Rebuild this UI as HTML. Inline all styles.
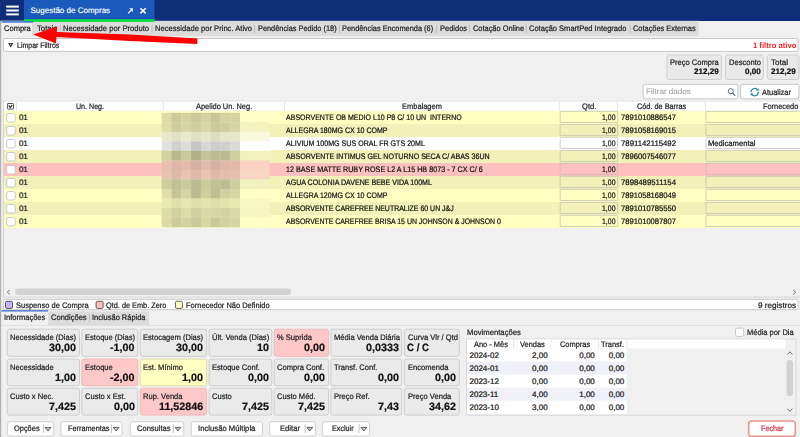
<!DOCTYPE html>
<html><head><meta charset="utf-8"><title>Sugestão de Compras</title>
<style>
*{box-sizing:border-box;margin:0;padding:0}
html,body{width:800px;height:437px;overflow:hidden;background:#f0f0f0}
body{font-family:"Liberation Sans",sans-serif;font-size:8px;color:#222;position:relative;line-height:1;text-rendering:geometricPrecision}
svg{position:absolute;left:0;top:0}
.t{position:absolute;white-space:nowrap;line-height:1;transform-origin:0 50%;-webkit-text-stroke:.22px currentColor}

</style></head>
<body>
<svg width="800" height="437" viewBox="0 0 800 437"><defs><filter id="bl" x="-5%" y="-5%" width="110%" height="110%"><feGaussianBlur stdDeviation="0.5"/></filter></defs>
<rect x="0.00" y="0.00" width="800.00" height="21.00" fill="#0f2e7a"/>
<rect x="24.00" y="0.00" width="130.40" height="21.00" fill="#1b5abc"/>
<rect x="24.00" y="18.20" width="130.40" height="1.10" fill="#1c4cc2"/>
<rect x="6.20" y="5.60" width="12.60" height="2.00" fill="#ffffff"/>
<rect x="6.20" y="9.50" width="12.60" height="2.00" fill="#ffffff"/>
<rect x="6.20" y="13.40" width="12.60" height="2.00" fill="#ffffff"/>
<path d="M128.1 13.4 L132 9.4" fill="none" stroke="#fff" stroke-width="1.35" />
<path d="M129.2 8.3 H132.9 V12 Z" fill="#fff" />
<path d="M140.4 8.2 L145.7 13.4 M145.7 8.2 L140.4 13.4" fill="none" stroke="#fff" stroke-width="1.5" />
<rect x="0.00" y="20.80" width="698.70" height="15.30" fill="#dcdcdc"/>
<rect x="1.20" y="20.80" width="30.80" height="15.30" fill="#f0f0f0"/>
<rect x="24.00" y="19.20" width="130.40" height="2.70" fill="#08e23c"/>
<rect x="1.20" y="21.15" width="31.80" height="1.55" fill="#3c78cc"/>
<rect x="60.10" y="24.80" width="0.80" height="8.20" fill="#b6b6b6"/>
<rect x="151.50" y="24.80" width="0.80" height="8.20" fill="#b6b6b6"/>
<rect x="254.20" y="24.80" width="0.80" height="8.20" fill="#b6b6b6"/>
<rect x="338.90" y="24.80" width="0.80" height="8.20" fill="#b6b6b6"/>
<rect x="435.90" y="24.80" width="0.80" height="8.20" fill="#b6b6b6"/>
<rect x="469.20" y="24.80" width="0.80" height="8.20" fill="#b6b6b6"/>
<rect x="525.90" y="24.80" width="0.80" height="8.20" fill="#b6b6b6"/>
<rect x="629.70" y="24.80" width="0.80" height="8.20" fill="#b6b6b6"/>
<rect x="3.40" y="38.50" width="794.70" height="12.90" rx="1.5" fill="#fff" stroke="#c6c6c6" stroke-width="1"/>
<path d="M8.1 43.1 H13.3 L10.7 47.4 Z" fill="#2a2a2a" />
<path d="M9.9 43.8 H11.5 L10.7 45.2Z" fill="#fff" />
<rect x="666.90" y="55.00" width="54.50" height="24.50" rx="2.3" fill="#e9e9e9" stroke="#d0d0d0" stroke-width="1"/>
<rect x="725.50" y="55.00" width="37.90" height="24.50" rx="2.3" fill="#e9e9e9" stroke="#d0d0d0" stroke-width="1"/>
<rect x="767.30" y="55.00" width="31.70" height="24.50" rx="2.3" fill="#e9e9e9" stroke="#d0d0d0" stroke-width="1"/>
<rect x="643.20" y="84.30" width="94.60" height="14.50" rx="1.8" fill="#fff" stroke="#c8c8c8" stroke-width="1"/>
<circle cx="730.8" cy="91.2" r="2.55" fill="none" stroke="#50607a" stroke-width="0.95"/>
<path d="M732.7 93.1 L735.2 95.6" fill="none" stroke="#50607a" stroke-width="1.2" />
<rect x="740.60" y="84.30" width="58.30" height="14.50" rx="1.8" fill="#fff" stroke="#c8c8c8" stroke-width="1"/>
<g transform="translate(749.8,87.3)"><g fill="none" stroke="#1f8596" stroke-width="1.2"><path d="M1.3 4.9 A3.6 3.6 0 0 1 7.6 2.4"/><path d="M8.5 4.7 A3.6 3.6 0 0 1 2.2 7.2"/></g><path d="M8.9 0.9 L8.8 3.7 L6.1 3.3Z" fill="#1f8596"/><path d="M0.9 8.7 L1 5.9 L3.7 6.3Z" fill="#1f8596"/></g>
<rect x="3.10" y="100.80" width="796.90" height="196.50" fill="none"/>
<rect x="3.10" y="100.80" width="796.90" height="0.70" fill="#d4d4d4"/>
<rect x="3.10" y="100.80" width="0.70" height="196.50" fill="#c2c2c2"/>
<rect x="3.10" y="296.70" width="796.90" height="0.70" fill="#d0d0d0"/>
<rect x="3.80" y="101.50" width="796.20" height="8.90" fill="#ffffff"/>
<rect x="16.00" y="101.50" width="0.80" height="8.90" fill="#dedede"/>
<rect x="162.80" y="101.50" width="0.80" height="8.90" fill="#dedede"/>
<rect x="284.00" y="101.50" width="0.80" height="8.90" fill="#dedede"/>
<rect x="559.30" y="101.50" width="0.80" height="8.90" fill="#dedede"/>
<rect x="617.20" y="101.50" width="0.80" height="8.90" fill="#dedede"/>
<rect x="705.20" y="101.50" width="0.80" height="8.90" fill="#dedede"/>
<rect x="7.40" y="103.50" width="6.10" height="5.60" rx="0.6" fill="#fff" stroke="#555" stroke-width="1"/>
<path d="M8.8 105.4 L10.3 107.5 L12.3 104.9" fill="none" stroke="#222" stroke-width="1.1" />
<rect x="3.80" y="111.00" width="796.20" height="13.30" fill="#ffffc2"/>
<rect x="3.80" y="124.00" width="796.20" height="13.30" fill="#f1f1b9"/>
<rect x="3.80" y="137.00" width="796.20" height="13.30" fill="#ffffff"/>
<rect x="3.80" y="150.00" width="796.20" height="13.30" fill="#f1f1b9"/>
<rect x="3.80" y="163.00" width="796.20" height="13.30" fill="#ffc0c0"/>
<rect x="3.80" y="176.00" width="796.20" height="13.30" fill="#f1f1b9"/>
<rect x="3.80" y="189.00" width="796.20" height="13.30" fill="#ffffc2"/>
<rect x="3.80" y="202.00" width="796.20" height="13.30" fill="#f1f1b9"/>
<rect x="3.80" y="215.00" width="796.20" height="13.00" fill="#ffffc2"/>
<rect x="6.70" y="113.50" width="8.50" height="8.50" rx="1.8" fill="#fff" stroke="#c6c6d0" stroke-width="1"/>
<rect x="560.15" y="111.35" width="57.50" height="11.10" rx="0.4" fill="#ffffc2" stroke="#bcbcb0" stroke-width="0.7"/>
<rect x="705.95" y="111.35" width="96.00" height="11.10" rx="0.4" fill="#ffffc2" stroke="#bcbcb0" stroke-width="0.7"/>
<rect x="6.70" y="126.50" width="8.50" height="8.50" rx="1.8" fill="#fff" stroke="#c6c6d0" stroke-width="1"/>
<rect x="560.15" y="124.35" width="57.50" height="11.10" rx="0.4" fill="#f1f1b9" stroke="#bcbcb0" stroke-width="0.7"/>
<rect x="705.95" y="124.35" width="96.00" height="11.10" rx="0.4" fill="#f1f1b9" stroke="#bcbcb0" stroke-width="0.7"/>
<rect x="6.70" y="139.50" width="8.50" height="8.50" rx="1.8" fill="#fff" stroke="#c6c6d0" stroke-width="1"/>
<rect x="560.15" y="137.35" width="57.50" height="11.10" rx="0.4" fill="#ffffff" stroke="#bcbcb0" stroke-width="0.7"/>
<rect x="705.95" y="137.35" width="96.00" height="11.10" rx="0.4" fill="#ffffff" stroke="#bcbcb0" stroke-width="0.7"/>
<rect x="6.70" y="152.50" width="8.50" height="8.50" rx="1.8" fill="#fff" stroke="#c6c6d0" stroke-width="1"/>
<rect x="560.15" y="150.35" width="57.50" height="11.10" rx="0.4" fill="#f1f1b9" stroke="#bcbcb0" stroke-width="0.7"/>
<rect x="705.95" y="150.35" width="96.00" height="11.10" rx="0.4" fill="#f1f1b9" stroke="#bcbcb0" stroke-width="0.7"/>
<rect x="6.70" y="165.50" width="8.50" height="8.50" rx="1.8" fill="#fff" stroke="#c6c6d0" stroke-width="1"/>
<rect x="560.15" y="163.35" width="57.50" height="11.10" rx="0.4" fill="#ffc0c0" stroke="#bcbcb0" stroke-width="0.7"/>
<rect x="705.95" y="163.35" width="96.00" height="11.10" rx="0.4" fill="#ffc0c0" stroke="#bcbcb0" stroke-width="0.7"/>
<rect x="6.70" y="178.50" width="8.50" height="8.50" rx="1.8" fill="#fff" stroke="#c6c6d0" stroke-width="1"/>
<rect x="560.15" y="176.35" width="57.50" height="11.10" rx="0.4" fill="#f1f1b9" stroke="#bcbcb0" stroke-width="0.7"/>
<rect x="705.95" y="176.35" width="96.00" height="11.10" rx="0.4" fill="#f1f1b9" stroke="#bcbcb0" stroke-width="0.7"/>
<rect x="6.70" y="191.50" width="8.50" height="8.50" rx="1.8" fill="#fff" stroke="#c6c6d0" stroke-width="1"/>
<rect x="560.15" y="189.35" width="57.50" height="11.10" rx="0.4" fill="#ffffc2" stroke="#bcbcb0" stroke-width="0.7"/>
<rect x="705.95" y="189.35" width="96.00" height="11.10" rx="0.4" fill="#ffffc2" stroke="#bcbcb0" stroke-width="0.7"/>
<rect x="6.70" y="204.50" width="8.50" height="8.50" rx="1.8" fill="#fff" stroke="#c6c6d0" stroke-width="1"/>
<rect x="560.15" y="202.35" width="57.50" height="11.10" rx="0.4" fill="#f1f1b9" stroke="#bcbcb0" stroke-width="0.7"/>
<rect x="705.95" y="202.35" width="96.00" height="11.10" rx="0.4" fill="#f1f1b9" stroke="#bcbcb0" stroke-width="0.7"/>
<rect x="6.70" y="217.50" width="8.50" height="8.50" rx="1.8" fill="#fff" stroke="#c6c6d0" stroke-width="1"/>
<rect x="560.15" y="215.35" width="57.50" height="11.10" rx="0.4" fill="#ffffc2" stroke="#bcbcb0" stroke-width="0.7"/>
<rect x="705.95" y="215.35" width="96.00" height="11.10" rx="0.4" fill="#ffffc2" stroke="#bcbcb0" stroke-width="0.7"/>
<g filter="url(#bl)"><rect x="161.70" y="112.80" width="10.00" height="9.72" fill="#dcdca9"/><rect x="171.50" y="112.80" width="10.00" height="9.72" fill="#caca9b"/><rect x="181.30" y="112.80" width="10.00" height="9.72" fill="#d3d3a2"/><rect x="191.10" y="112.80" width="10.00" height="9.72" fill="#c9c99a"/><rect x="200.90" y="112.80" width="10.00" height="9.72" fill="#d1d1a1"/><rect x="210.70" y="112.80" width="10.00" height="9.72" fill="#c6c698"/><rect x="220.50" y="112.80" width="10.00" height="9.72" fill="#d3d3a2"/><rect x="230.30" y="112.80" width="10.00" height="9.72" fill="#d4d4a3"/><rect x="240.10" y="112.80" width="10.00" height="9.72" fill="#fefec7"/><rect x="249.90" y="112.80" width="10.00" height="9.72" fill="#fefec8"/><rect x="259.70" y="112.80" width="10.00" height="9.72" fill="#ffffc8"/><rect x="161.70" y="122.32" width="10.00" height="9.72" fill="#dedeab"/><rect x="171.50" y="122.32" width="10.00" height="9.72" fill="#cccc9e"/><rect x="181.30" y="122.32" width="10.00" height="9.72" fill="#d4d4a4"/><rect x="191.10" y="122.32" width="10.00" height="9.72" fill="#cece9f"/><rect x="200.90" y="122.32" width="10.00" height="9.72" fill="#d8d8a6"/><rect x="210.70" y="122.32" width="10.00" height="9.72" fill="#caca9c"/><rect x="220.50" y="122.32" width="10.00" height="9.72" fill="#cdcd9e"/><rect x="230.30" y="122.32" width="10.00" height="9.72" fill="#d6d6a5"/><rect x="240.10" y="122.32" width="10.00" height="9.72" fill="#f4f4c1"/><rect x="249.90" y="122.32" width="10.00" height="9.72" fill="#f4f4c1"/><rect x="259.70" y="122.32" width="10.00" height="9.72" fill="#f4f4c1"/><rect x="161.70" y="131.84" width="10.00" height="9.72" fill="#e7e7cb"/><rect x="171.50" y="131.84" width="10.00" height="9.72" fill="#e1e1c6"/><rect x="181.30" y="131.84" width="10.00" height="9.72" fill="#e8e8cc"/><rect x="191.10" y="131.84" width="10.00" height="9.72" fill="#e1e1c6"/><rect x="200.90" y="131.84" width="10.00" height="9.72" fill="#e6e6ca"/><rect x="210.70" y="131.84" width="10.00" height="9.72" fill="#ddddc2"/><rect x="220.50" y="131.84" width="10.00" height="9.72" fill="#e5e5c9"/><rect x="230.30" y="131.84" width="10.00" height="9.72" fill="#e6e6ca"/><rect x="240.10" y="131.84" width="10.00" height="9.72" fill="#f8f8dc"/><rect x="249.90" y="131.84" width="10.00" height="9.72" fill="#f8f8dd"/><rect x="259.70" y="131.84" width="10.00" height="9.72" fill="#f8f8dd"/><rect x="161.70" y="141.36" width="10.00" height="9.72" fill="#e2e2dd"/><rect x="171.50" y="141.36" width="10.00" height="9.72" fill="#d1d1cd"/><rect x="181.30" y="141.36" width="10.00" height="9.72" fill="#dcdcd8"/><rect x="191.10" y="141.36" width="10.00" height="9.72" fill="#c5c5c1"/><rect x="200.90" y="141.36" width="10.00" height="9.72" fill="#d7d7d3"/><rect x="210.70" y="141.36" width="10.00" height="9.72" fill="#cdcdc9"/><rect x="220.50" y="141.36" width="10.00" height="9.72" fill="#d0d0cc"/><rect x="230.30" y="141.36" width="10.00" height="9.72" fill="#d9d9d5"/><rect x="240.10" y="141.36" width="10.00" height="9.72" fill="#fdfdf8"/><rect x="249.90" y="141.36" width="10.00" height="9.72" fill="#fdfdf9"/><rect x="259.70" y="141.36" width="10.00" height="9.72" fill="#fdfdf9"/><rect x="161.70" y="150.88" width="10.00" height="9.72" fill="#d1d1a2"/><rect x="171.50" y="150.88" width="10.00" height="9.72" fill="#b8b88f"/><rect x="181.30" y="150.88" width="10.00" height="9.72" fill="#c9c99b"/><rect x="191.10" y="150.88" width="10.00" height="9.72" fill="#b0b089"/><rect x="200.90" y="150.88" width="10.00" height="9.72" fill="#c4c498"/><rect x="210.70" y="150.88" width="10.00" height="9.72" fill="#bdbd93"/><rect x="220.50" y="150.88" width="10.00" height="9.72" fill="#baba91"/><rect x="230.30" y="150.88" width="10.00" height="9.72" fill="#cece9f"/><rect x="240.10" y="150.88" width="10.00" height="9.72" fill="#f1f1bf"/><rect x="249.90" y="150.88" width="10.00" height="9.72" fill="#f2f2bf"/><rect x="259.70" y="150.88" width="10.00" height="9.72" fill="#f2f2c0"/><rect x="161.70" y="160.40" width="10.00" height="9.72" fill="#e7beb0"/><rect x="171.50" y="160.40" width="10.00" height="9.72" fill="#dfb7aa"/><rect x="181.30" y="160.40" width="10.00" height="9.72" fill="#e3baac"/><rect x="191.10" y="160.40" width="10.00" height="9.72" fill="#d7b0a4"/><rect x="200.90" y="160.40" width="10.00" height="9.72" fill="#e2b9ac"/><rect x="210.70" y="160.40" width="10.00" height="9.72" fill="#d7b1a4"/><rect x="220.50" y="160.40" width="10.00" height="9.72" fill="#e1b9ab"/><rect x="230.30" y="160.40" width="10.00" height="9.72" fill="#e3baac"/><rect x="240.10" y="160.40" width="10.00" height="9.72" fill="#fbd2c4"/><rect x="249.90" y="160.40" width="10.00" height="9.72" fill="#fbd2c4"/><rect x="259.70" y="160.40" width="10.00" height="9.72" fill="#fbd2c4"/><rect x="161.70" y="169.92" width="10.00" height="9.72" fill="#e8c3b1"/><rect x="171.50" y="169.92" width="10.00" height="9.72" fill="#dcbaa8"/><rect x="181.30" y="169.92" width="10.00" height="9.72" fill="#e8c3b0"/><rect x="191.10" y="169.92" width="10.00" height="9.72" fill="#ddbaa9"/><rect x="200.90" y="169.92" width="10.00" height="9.72" fill="#e9c4b1"/><rect x="210.70" y="169.92" width="10.00" height="9.72" fill="#debba9"/><rect x="220.50" y="169.92" width="10.00" height="9.72" fill="#e3bfad"/><rect x="230.30" y="169.92" width="10.00" height="9.72" fill="#e5c0ae"/><rect x="240.10" y="169.92" width="10.00" height="9.72" fill="#fad6c4"/><rect x="249.90" y="169.92" width="10.00" height="9.72" fill="#fad6c4"/><rect x="259.70" y="169.92" width="10.00" height="9.72" fill="#fad6c4"/><rect x="161.70" y="179.44" width="10.00" height="9.72" fill="#cdcd9e"/><rect x="171.50" y="179.44" width="10.00" height="9.72" fill="#c1c196"/><rect x="181.30" y="179.44" width="10.00" height="9.72" fill="#caca9c"/><rect x="191.10" y="179.44" width="10.00" height="9.72" fill="#bcbc92"/><rect x="200.90" y="179.44" width="10.00" height="9.72" fill="#cbcb9d"/><rect x="210.70" y="179.44" width="10.00" height="9.72" fill="#c1c195"/><rect x="220.50" y="179.44" width="10.00" height="9.72" fill="#bdbd93"/><rect x="230.30" y="179.44" width="10.00" height="9.72" fill="#cece9f"/><rect x="240.10" y="179.44" width="10.00" height="9.72" fill="#f2f2bf"/><rect x="249.90" y="179.44" width="10.00" height="9.72" fill="#f2f2bf"/><rect x="259.70" y="179.44" width="10.00" height="9.72" fill="#f2f2c0"/><rect x="161.70" y="188.96" width="10.00" height="9.72" fill="#dfdfab"/><rect x="171.50" y="188.96" width="10.00" height="9.72" fill="#c5c598"/><rect x="181.30" y="188.96" width="10.00" height="9.72" fill="#d5d5a3"/><rect x="191.10" y="188.96" width="10.00" height="9.72" fill="#bbbb90"/><rect x="200.90" y="188.96" width="10.00" height="9.72" fill="#cece9e"/><rect x="210.70" y="188.96" width="10.00" height="9.72" fill="#bebe93"/><rect x="220.50" y="188.96" width="10.00" height="9.72" fill="#d0d0a0"/><rect x="230.30" y="188.96" width="10.00" height="9.72" fill="#d6d6a4"/><rect x="240.10" y="188.96" width="10.00" height="9.72" fill="#fefec7"/><rect x="249.90" y="188.96" width="10.00" height="9.72" fill="#fefec7"/><rect x="259.70" y="188.96" width="10.00" height="9.72" fill="#ffffc8"/><rect x="161.70" y="198.48" width="10.00" height="9.72" fill="#e9e9b3"/><rect x="171.50" y="198.48" width="10.00" height="9.72" fill="#e0e0ac"/><rect x="181.30" y="198.48" width="10.00" height="9.72" fill="#e6e6b1"/><rect x="191.10" y="198.48" width="10.00" height="9.72" fill="#dfdfab"/><rect x="200.90" y="198.48" width="10.00" height="9.72" fill="#e4e4af"/><rect x="210.70" y="198.48" width="10.00" height="9.72" fill="#dedeaa"/><rect x="220.50" y="198.48" width="10.00" height="9.72" fill="#e3e3ae"/><rect x="230.30" y="198.48" width="10.00" height="9.72" fill="#e8e8b2"/><rect x="240.10" y="198.48" width="10.00" height="9.72" fill="#f7f7c3"/><rect x="249.90" y="198.48" width="10.00" height="9.72" fill="#f7f7c3"/><rect x="259.70" y="198.48" width="10.00" height="9.72" fill="#f7f7c3"/><rect x="161.70" y="208.00" width="10.00" height="9.72" fill="#ddddaa"/><rect x="171.50" y="208.00" width="10.00" height="9.72" fill="#d1d1a1"/><rect x="181.30" y="208.00" width="10.00" height="9.72" fill="#dcdca9"/><rect x="191.10" y="208.00" width="10.00" height="9.72" fill="#d0d0a0"/><rect x="200.90" y="208.00" width="10.00" height="9.72" fill="#d9d9a7"/><rect x="210.70" y="208.00" width="10.00" height="9.72" fill="#d7d7a6"/><rect x="220.50" y="208.00" width="10.00" height="9.72" fill="#d4d4a3"/><rect x="230.30" y="208.00" width="10.00" height="9.72" fill="#dadaa8"/><rect x="240.10" y="208.00" width="10.00" height="9.72" fill="#f5f5c2"/><rect x="249.90" y="208.00" width="10.00" height="9.72" fill="#f5f5c2"/><rect x="259.70" y="208.00" width="10.00" height="9.72" fill="#f6f6c2"/><rect x="161.70" y="217.52" width="10.00" height="9.72" fill="#dbdba8"/><rect x="171.50" y="217.52" width="10.00" height="9.72" fill="#cbcb9c"/><rect x="181.30" y="217.52" width="10.00" height="9.72" fill="#d3d3a2"/><rect x="191.10" y="217.52" width="10.00" height="9.72" fill="#c9c99a"/><rect x="200.90" y="217.52" width="10.00" height="9.72" fill="#d8d8a5"/><rect x="210.70" y="217.52" width="10.00" height="9.72" fill="#c9c99a"/><rect x="220.50" y="217.52" width="10.00" height="9.72" fill="#d1d1a1"/><rect x="230.30" y="217.52" width="10.00" height="9.72" fill="#d6d6a4"/><rect x="240.10" y="217.52" width="10.00" height="9.72" fill="#fefec7"/><rect x="249.90" y="217.52" width="10.00" height="9.72" fill="#ffffc8"/><rect x="259.70" y="217.52" width="10.00" height="9.72" fill="#ffffc8"/></g>
<rect x="15.10" y="288.60" width="275.90" height="6.40" rx="3.2" fill="#d2d2d2"/>
<path d="M9.8 290.1 L7.3 292.2 L9.8 294.4" fill="none" stroke="#555" stroke-width="0.8" />
<path d="M793.2 290.1 L795.7 292.2 L793.2 294.4" fill="none" stroke="#555" stroke-width="0.8" />
<rect x="3.60" y="299.30" width="794.50" height="10.40" rx="1.2" fill="#fff" stroke="#c8c8c8" stroke-width="1"/>
<rect x="5.50" y="301.30" width="7.00" height="7.10" rx="1.3" fill="#c5b6fb" stroke="#55555f" stroke-width="1"/>
<rect x="96.10" y="301.30" width="7.00" height="7.10" rx="1.3" fill="#ffc0c0" stroke="#6a5555" stroke-width="1"/>
<rect x="175.40" y="301.30" width="7.00" height="7.10" rx="1.3" fill="#ffffc2" stroke="#66664a" stroke-width="1"/>
<rect x="0.00" y="311.40" width="149.00" height="13.60" fill="#dcdcdc"/>
<rect x="1.00" y="311.40" width="47.10" height="13.60" fill="#f0f0f0"/>
<rect x="1.00" y="310.20" width="47.10" height="1.30" fill="#3b6fd0"/>
<rect x="89.10" y="314.30" width="0.80" height="7.90" fill="#b6b6b6"/>
<rect x="0.00" y="325.00" width="800.00" height="0.70" fill="#d8d8d8"/>
<rect x="7.30" y="329.20" width="72.20" height="27.10" rx="2.3" fill="#eaeaea" stroke="#cecece" stroke-width="1"/>
<rect x="81.80" y="329.20" width="56.00" height="27.10" rx="2.3" fill="#eaeaea" stroke="#cecece" stroke-width="1"/>
<rect x="140.30" y="329.20" width="66.30" height="27.10" rx="2.3" fill="#eaeaea" stroke="#cecece" stroke-width="1"/>
<rect x="209.10" y="329.20" width="62.70" height="27.10" rx="2.3" fill="#eaeaea" stroke="#cecece" stroke-width="1"/>
<rect x="274.20" y="329.20" width="54.40" height="27.10" rx="2.3" fill="#ffc8c8" stroke="#f0baba" stroke-width="1"/>
<rect x="330.90" y="329.20" width="70.80" height="27.10" rx="2.3" fill="#eaeaea" stroke="#cecece" stroke-width="1"/>
<rect x="404.40" y="329.20" width="54.90" height="27.10" rx="2.3" fill="#eaeaea" stroke="#cecece" stroke-width="1"/>
<rect x="7.30" y="359.10" width="72.20" height="26.70" rx="2.3" fill="#eaeaea" stroke="#cecece" stroke-width="1"/>
<rect x="81.80" y="359.10" width="56.00" height="26.70" rx="2.3" fill="#ffc8c8" stroke="#f0baba" stroke-width="1"/>
<rect x="140.30" y="359.10" width="66.30" height="26.70" rx="2.3" fill="#ffffc2" stroke="#dcdcaa" stroke-width="1"/>
<rect x="209.10" y="359.10" width="62.70" height="26.70" rx="2.3" fill="#eaeaea" stroke="#cecece" stroke-width="1"/>
<rect x="274.20" y="359.10" width="54.40" height="26.70" rx="2.3" fill="#eaeaea" stroke="#cecece" stroke-width="1"/>
<rect x="330.90" y="359.10" width="70.80" height="26.70" rx="2.3" fill="#eaeaea" stroke="#cecece" stroke-width="1"/>
<rect x="404.40" y="359.10" width="54.90" height="26.70" rx="2.3" fill="#eaeaea" stroke="#cecece" stroke-width="1"/>
<rect x="7.30" y="388.30" width="72.20" height="26.80" rx="2.3" fill="#eaeaea" stroke="#cecece" stroke-width="1"/>
<rect x="81.80" y="388.30" width="56.00" height="26.80" rx="2.3" fill="#eaeaea" stroke="#cecece" stroke-width="1"/>
<rect x="140.30" y="388.30" width="66.30" height="26.80" rx="2.3" fill="#ffc8c8" stroke="#f0baba" stroke-width="1"/>
<rect x="209.10" y="388.30" width="62.70" height="26.80" rx="2.3" fill="#eaeaea" stroke="#cecece" stroke-width="1"/>
<rect x="274.20" y="388.30" width="54.40" height="26.80" rx="2.3" fill="#eaeaea" stroke="#cecece" stroke-width="1"/>
<rect x="330.90" y="388.30" width="70.80" height="26.80" rx="2.3" fill="#eaeaea" stroke="#cecece" stroke-width="1"/>
<rect x="404.40" y="388.30" width="54.90" height="26.80" rx="2.3" fill="#eaeaea" stroke="#cecece" stroke-width="1"/>
<rect x="735.50" y="328.10" width="8.20" height="8.30" rx="1.8" fill="#fff" stroke="#c6c6d0" stroke-width="1"/>
<rect x="466.50" y="339.00" width="329.50" height="76.20" fill="#f0f0f0" stroke="#d2d2d2" stroke-width="0.8"/>
<rect x="467.00" y="339.50" width="318.30" height="8.90" fill="#fff"/>
<rect x="513.10" y="339.50" width="0.80" height="8.90" fill="#dedede"/>
<rect x="550.60" y="339.50" width="0.80" height="8.90" fill="#dedede"/>
<rect x="598.30" y="339.50" width="0.80" height="8.90" fill="#dedede"/>
<rect x="626.60" y="339.50" width="0.80" height="8.90" fill="#dedede"/>
<rect x="467.00" y="348.40" width="159.90" height="13.30" fill="#fff"/>
<rect x="467.00" y="361.50" width="159.90" height="13.30" fill="#f0f0f8"/>
<rect x="467.00" y="374.60" width="159.90" height="13.30" fill="#fff"/>
<rect x="467.00" y="387.70" width="159.90" height="13.30" fill="#f0f0f8"/>
<rect x="467.00" y="400.80" width="159.90" height="13.30" fill="#fff"/>
<rect x="786.60" y="360.00" width="6.40" height="36.00" rx="3.1" fill="#d2d2d2"/>
<path d="M787.5 354.5 L789.9 351.8 L792.3 354.5" fill="none" stroke="#606060" stroke-width="0.9" />
<path d="M787.5 408.7 L789.9 411.4 L792.3 408.7" fill="none" stroke="#606060" stroke-width="0.9" />
<rect x="7.60" y="421.70" width="46.20" height="14.40" rx="2.2" fill="#fff" stroke="#d0d0d0" stroke-width="1"/>
<rect x="42.90" y="424.20" width="0.80" height="9.00" fill="#b8b8b8"/>
<path d="M45.10 427.4 H50.90 L48.00 431 Z" fill="#c4c4c4" stroke="#444" stroke-width="0.8" stroke-linejoin="round"/>
<rect x="60.90" y="421.70" width="61.10" height="14.40" rx="2.2" fill="#fff" stroke="#d0d0d0" stroke-width="1"/>
<rect x="111.10" y="424.20" width="0.80" height="9.00" fill="#b8b8b8"/>
<path d="M113.30 427.4 H119.10 L116.20 431 Z" fill="#c4c4c4" stroke="#444" stroke-width="0.8" stroke-linejoin="round"/>
<rect x="130.20" y="421.70" width="53.60" height="14.40" rx="2.2" fill="#fff" stroke="#d0d0d0" stroke-width="1"/>
<rect x="172.90" y="424.20" width="0.80" height="9.00" fill="#b8b8b8"/>
<path d="M175.10 427.4 H180.90 L178.00 431 Z" fill="#c4c4c4" stroke="#444" stroke-width="0.8" stroke-linejoin="round"/>
<rect x="191.20" y="421.70" width="71.30" height="14.40" rx="2.2" fill="#fff" stroke="#d0d0d0" stroke-width="1"/>
<rect x="269.70" y="421.70" width="45.90" height="14.40" rx="2.2" fill="#fff" stroke="#d0d0d0" stroke-width="1"/>
<rect x="304.70" y="424.20" width="0.80" height="9.00" fill="#b8b8b8"/>
<path d="M306.90 427.4 H312.70 L309.80 431 Z" fill="#c4c4c4" stroke="#444" stroke-width="0.8" stroke-linejoin="round"/>
<rect x="322.60" y="421.70" width="47.00" height="14.40" rx="2.2" fill="#fff" stroke="#d0d0d0" stroke-width="1"/>
<rect x="358.70" y="424.20" width="0.80" height="9.00" fill="#b8b8b8"/>
<path d="M360.90 427.4 H366.70 L363.80 431 Z" fill="#c4c4c4" stroke="#444" stroke-width="0.8" stroke-linejoin="round"/>
<rect x="748.70" y="421.00" width="46.60" height="15.40" rx="3" fill="#fff" stroke="#ec9494" stroke-width="1.6"/>
<rect x="0.00" y="21.00" width="0.75" height="416.00" fill="#8a8a8a"/>
<rect x="0.75" y="21.00" width="0.75" height="416.00" fill="#d6d6d6"/>
</svg>
<div class="t" style="left:30.50px;top:7.00px;font-size:8px;color:#fff;-webkit-text-stroke:.15px #fff;">Sugestão de Compras</div>
<div class="t" style="left:3.60px;top:25.00px;font-size:8px;color:#222;transform:scaleX(0.9419);">Compra</div>
<div class="t" style="left:37.00px;top:25.00px;font-size:8px;color:#222;transform:scaleX(0.9666);">Totais</div>
<div class="t" style="left:62.60px;top:25.00px;font-size:8px;color:#222;transform:scaleX(0.9537);">Necessidade por Produto</div>
<div class="t" style="left:154.60px;top:25.00px;font-size:8px;color:#222;transform:scaleX(0.9494);">Necessidade por Princ. Ativo</div>
<div class="t" style="left:257.60px;top:25.00px;font-size:8px;color:#222;transform:scaleX(0.9204);">Pendências Pedido (18)</div>
<div class="t" style="left:342.10px;top:25.00px;font-size:8px;color:#222;transform:scaleX(0.9227);">Pendências Encomenda (6)</div>
<div class="t" style="left:439.60px;top:25.00px;font-size:8px;color:#222;transform:scaleX(0.9374);">Pedidos</div>
<div class="t" style="left:472.60px;top:25.00px;font-size:8px;color:#222;transform:scaleX(0.9266);">Cotação Online</div>
<div class="t" style="left:529.30px;top:25.00px;font-size:8px;color:#222;transform:scaleX(0.9400);">Cotação SmartPed Integrado</div>
<div class="t" style="left:633.10px;top:25.00px;font-size:8px;color:#222;transform:scaleX(0.9262);">Cotações Externas</div>
<div class="t" style="left:17.00px;top:42.00px;font-size:8px;color:#222;transform:scaleX(0.8730);">Limpar Filtros</div>
<div class="t" style="left:753.00px;top:42.00px;font-size:8px;color:#fa2020;font-weight:bold;transform:scaleX(0.9550);-webkit-text-stroke:0;">1 filtro ativo</div>
<div class="t" style="left:670.00px;top:59.00px;font-size:8px;color:#222;transform:scaleX(0.9423);">Preço Compra</div>
<div class="t" style="left:694.10px;top:68.00px;font-size:8px;color:#111;font-weight:bold;transform:scaleX(1.0053);">212,29</div>
<div class="t" style="left:728.60px;top:59.00px;font-size:8px;color:#222;transform:scaleX(0.9468);">Desconto</div>
<div class="t" style="left:745.20px;top:68.00px;font-size:8px;color:#111;font-weight:bold;transform:scaleX(1.0147);">0,00</div>
<div class="t" style="left:771.10px;top:59.00px;font-size:8px;color:#222;transform:scaleX(1.0060);">Total</div>
<div class="t" style="left:771.10px;top:68.00px;font-size:8px;color:#111;font-weight:bold;transform:scaleX(1.0053);">212,29</div>
<div class="t" style="left:645.80px;top:88.00px;font-size:8px;color:#a2a2a2;transform:scaleX(1.0076);-webkit-text-stroke:.08px currentColor;">Filtrar dados</div>
<div class="t" style="left:762.40px;top:89.00px;font-size:8px;color:#222;transform:scaleX(0.9285);">Atualizar</div>
<div class="t" style="left:75.80px;top:103.00px;font-size:8px;color:#222;transform:scaleX(0.8869);">Un. Neg.</div>
<div class="t" style="left:195.70px;top:103.00px;font-size:8px;color:#222;transform:scaleX(0.9292);">Apelido Un. Neg.</div>
<div class="t" style="left:401.85px;top:103.00px;font-size:8px;color:#222;transform:scaleX(0.9347);">Embalagem</div>
<div class="t" style="left:581.85px;top:103.00px;font-size:8px;color:#222;transform:scaleX(0.9460);">Qtd.</div>
<div class="t" style="left:637.20px;top:103.00px;font-size:8px;color:#222;transform:scaleX(0.9144);">Cód. de Barras</div>
<div class="t" style="left:763.30px;top:103.00px;font-size:8px;color:#222;transform:scaleX(0.9229);">Fornecedo</div>
<div class="t" style="left:18.90px;top:114.00px;font-size:8px;color:#111;">01</div>
<div class="t" style="left:286.30px;top:114.00px;font-size:8px;color:#111;transform:scaleX(0.8789);">ABSORVENTE OB MEDIO L10 P8 C/ 10 UN&nbsp; INTERNO</div>
<div class="t" style="left:602.30px;top:114.00px;font-size:8px;color:#111;transform:scaleX(0.8670);">1,00</div>
<div class="t" style="left:620.60px;top:114.00px;font-size:8px;color:#111;transform:scaleX(0.9509);">7891010886547</div>
<div class="t" style="left:18.90px;top:127.00px;font-size:8px;color:#111;">01</div>
<div class="t" style="left:286.30px;top:127.00px;font-size:8px;color:#111;transform:scaleX(0.8780);">ALLEGRA 180MG CX 10 COMP</div>
<div class="t" style="left:602.30px;top:127.00px;font-size:8px;color:#111;transform:scaleX(0.8670);">1,00</div>
<div class="t" style="left:620.60px;top:127.00px;font-size:8px;color:#111;transform:scaleX(0.9509);">7891058169015</div>
<div class="t" style="left:18.90px;top:140.00px;font-size:8px;color:#111;">01</div>
<div class="t" style="left:286.30px;top:140.00px;font-size:8px;color:#111;transform:scaleX(0.8867);">ALIVIUM 100MG SUS ORAL FR GTS 20ML</div>
<div class="t" style="left:602.30px;top:140.00px;font-size:8px;color:#111;transform:scaleX(0.8670);">1,00</div>
<div class="t" style="left:620.60px;top:140.00px;font-size:8px;color:#111;transform:scaleX(0.9708);">7891142115492</div>
<div class="t" style="left:708.00px;top:140.00px;font-size:8px;color:#111;transform:scaleX(0.9538);">Medicamental</div>
<div class="t" style="left:18.90px;top:153.00px;font-size:8px;color:#111;">01</div>
<div class="t" style="left:286.30px;top:153.00px;font-size:8px;color:#111;transform:scaleX(0.8863);">ABSORVENTE INTIMUS GEL NOTURNO SECA C/ ABAS 36UN</div>
<div class="t" style="left:602.30px;top:153.00px;font-size:8px;color:#111;transform:scaleX(0.8670);">1,00</div>
<div class="t" style="left:620.60px;top:153.00px;font-size:8px;color:#111;transform:scaleX(0.9509);">7896007546077</div>
<div class="t" style="left:18.90px;top:166.00px;font-size:8px;color:#111;">01</div>
<div class="t" style="left:286.30px;top:166.00px;font-size:8px;color:#111;transform:scaleX(0.8985);">12 BASE MATTE RUBY ROSE L2 A L15 HB 8073 - 7 CX C/ 6</div>
<div class="t" style="left:602.30px;top:166.00px;font-size:8px;color:#111;transform:scaleX(0.8670);">1,00</div>
<div class="t" style="left:18.90px;top:179.00px;font-size:8px;color:#111;">01</div>
<div class="t" style="left:286.30px;top:179.00px;font-size:8px;color:#111;transform:scaleX(0.8829);">AGUA COLONIA DAVENE BEBE VIDA 100ML</div>
<div class="t" style="left:602.30px;top:179.00px;font-size:8px;color:#111;transform:scaleX(0.8670);">1,00</div>
<div class="t" style="left:620.60px;top:179.00px;font-size:8px;color:#111;transform:scaleX(0.9708);">7898489511154</div>
<div class="t" style="left:18.90px;top:192.00px;font-size:8px;color:#111;">01</div>
<div class="t" style="left:286.30px;top:192.00px;font-size:8px;color:#111;transform:scaleX(0.8780);">ALLEGRA 120MG CX 10 COMP</div>
<div class="t" style="left:602.30px;top:192.00px;font-size:8px;color:#111;transform:scaleX(0.8670);">1,00</div>
<div class="t" style="left:620.60px;top:192.00px;font-size:8px;color:#111;transform:scaleX(0.9509);">7891058168049</div>
<div class="t" style="left:18.90px;top:205.00px;font-size:8px;color:#111;">01</div>
<div class="t" style="left:286.30px;top:205.00px;font-size:8px;color:#111;transform:scaleX(0.8699);">ABSORVENTE CAREFREE NEUTRALIZE 60 UN J&amp;J</div>
<div class="t" style="left:602.30px;top:205.00px;font-size:8px;color:#111;transform:scaleX(0.8670);">1,00</div>
<div class="t" style="left:620.60px;top:205.00px;font-size:8px;color:#111;transform:scaleX(0.9509);">7891010785550</div>
<div class="t" style="left:18.90px;top:218.00px;font-size:8px;color:#111;">01</div>
<div class="t" style="left:286.30px;top:218.00px;font-size:8px;color:#111;transform:scaleX(0.8668);">ABSORVENTE CAREFREE BRISA 15 UN JOHNSON &amp; JOHNSON 0</div>
<div class="t" style="left:602.30px;top:218.00px;font-size:8px;color:#111;transform:scaleX(0.8670);">1,00</div>
<div class="t" style="left:620.60px;top:218.00px;font-size:8px;color:#111;transform:scaleX(0.9509);">7891010087807</div>
<div class="t" style="left:15.70px;top:302.00px;font-size:8px;color:#222;transform:scaleX(0.9382);">Suspenso de Compra</div>
<div class="t" style="left:106.30px;top:302.00px;font-size:8px;color:#222;transform:scaleX(0.9163);">Qtd. de Emb. Zero</div>
<div class="t" style="left:185.60px;top:302.00px;font-size:8px;color:#222;transform:scaleX(0.9364);">Fornecedor Não Definido</div>
<div class="t" style="left:758.00px;top:302.00px;font-size:8px;color:#222;transform:scaleX(1.0174);">9 registros</div>
<div class="t" style="left:3.50px;top:314.00px;font-size:8px;color:#222;transform:scaleX(0.9382);">Informações</div>
<div class="t" style="left:51.00px;top:314.00px;font-size:8px;color:#222;transform:scaleX(0.9418);">Condições</div>
<div class="t" style="left:92.30px;top:314.00px;font-size:8px;color:#222;transform:scaleX(0.9325);">Inclusão Rápida</div>
<div class="t" style="left:10.40px;top:334.00px;font-size:8px;color:#222;transform:scaleX(0.9450);">Necessidade (Dias)</div>
<div class="t" style="left:49.38px;top:343.00px;font-size:10.6px;color:#111;font-weight:bold;transform:scaleX(1.0150);">30,00</div>
<div class="t" style="left:84.90px;top:334.00px;font-size:8px;color:#222;transform:scaleX(0.9450);">Estoque (Dias)</div>
<div class="t" style="left:110.08px;top:343.00px;font-size:10.6px;color:#111;font-weight:bold;transform:scaleX(1.0150);">-1,00</div>
<div class="t" style="left:143.40px;top:334.00px;font-size:8px;color:#222;transform:scaleX(0.9450);">Estocagem (Dias)</div>
<div class="t" style="left:176.48px;top:343.00px;font-size:10.6px;color:#111;font-weight:bold;transform:scaleX(1.0150);">30,00</div>
<div class="t" style="left:212.20px;top:334.00px;font-size:8px;color:#222;transform:scaleX(0.9450);">Últ. Venda (Dias)</div>
<div class="t" style="left:256.63px;top:343.00px;font-size:10.6px;color:#111;font-weight:bold;transform:scaleX(1.0150);">10</div>
<div class="t" style="left:277.30px;top:334.00px;font-size:8px;color:#222;transform:scaleX(0.9450);">% Suprida</div>
<div class="t" style="left:304.46px;top:343.00px;font-size:10.6px;color:#111;font-weight:bold;transform:scaleX(1.0150);">0,00</div>
<div class="t" style="left:334.00px;top:334.00px;font-size:8px;color:#222;transform:scaleX(0.9450);">Média Venda Diária</div>
<div class="t" style="left:365.59px;top:343.00px;font-size:10.6px;color:#111;font-weight:bold;transform:scaleX(1.0150);">0,0333</div>
<div class="t" style="left:407.50px;top:334.00px;font-size:8px;color:#222;transform:scaleX(0.9450);">Curva Vlr / Qtd</div>
<div class="t" style="left:407.40px;top:343.00px;font-size:10.6px;color:#111;font-weight:bold;transform:scaleX(0.9112);">C / C</div>
<div class="t" style="left:10.40px;top:364.00px;font-size:8px;color:#222;transform:scaleX(0.9450);">Necessidade</div>
<div class="t" style="left:55.36px;top:373.00px;font-size:10.6px;color:#111;font-weight:bold;transform:scaleX(1.0150);">1,00</div>
<div class="t" style="left:84.90px;top:364.00px;font-size:8px;color:#222;transform:scaleX(0.9450);">Estoque</div>
<div class="t" style="left:110.08px;top:373.00px;font-size:10.6px;color:#111;font-weight:bold;transform:scaleX(1.0150);">-2,00</div>
<div class="t" style="left:143.40px;top:364.00px;font-size:8px;color:#222;transform:scaleX(0.9450);">Est. Mínimo</div>
<div class="t" style="left:182.46px;top:373.00px;font-size:10.6px;color:#111;font-weight:bold;transform:scaleX(1.0150);">1,00</div>
<div class="t" style="left:212.20px;top:364.00px;font-size:8px;color:#222;transform:scaleX(0.9450);">Estoque Conf.</div>
<div class="t" style="left:247.66px;top:373.00px;font-size:10.6px;color:#111;font-weight:bold;transform:scaleX(1.0150);">0,00</div>
<div class="t" style="left:277.30px;top:364.00px;font-size:8px;color:#222;transform:scaleX(0.9450);">Compra Conf.</div>
<div class="t" style="left:304.46px;top:373.00px;font-size:10.6px;color:#111;font-weight:bold;transform:scaleX(1.0150);">0,00</div>
<div class="t" style="left:334.00px;top:364.00px;font-size:8px;color:#222;transform:scaleX(0.9450);">Transf. Conf.</div>
<div class="t" style="left:377.56px;top:373.00px;font-size:10.6px;color:#111;font-weight:bold;transform:scaleX(1.0150);">0,00</div>
<div class="t" style="left:407.50px;top:364.00px;font-size:8px;color:#222;transform:scaleX(0.9450);">Encomenda</div>
<div class="t" style="left:435.16px;top:373.00px;font-size:10.6px;color:#111;font-weight:bold;transform:scaleX(1.0150);">0,00</div>
<div class="t" style="left:10.40px;top:393.00px;font-size:8px;color:#222;transform:scaleX(0.9450);">Custo x Nec.</div>
<div class="t" style="left:49.38px;top:402.00px;font-size:10.6px;color:#111;font-weight:bold;transform:scaleX(1.0150);">7,425</div>
<div class="t" style="left:84.90px;top:393.00px;font-size:8px;color:#222;transform:scaleX(0.9450);">Custo x Est.</div>
<div class="t" style="left:113.66px;top:402.00px;font-size:10.6px;color:#111;font-weight:bold;transform:scaleX(1.0150);">0,00</div>
<div class="t" style="left:143.40px;top:393.00px;font-size:8px;color:#222;transform:scaleX(0.9450);">Rup. Venda</div>
<div class="t" style="left:159.12px;top:402.00px;font-size:10.6px;color:#111;font-weight:bold;transform:scaleX(1.0150);">11,52846</div>
<div class="t" style="left:212.20px;top:393.00px;font-size:8px;color:#222;transform:scaleX(0.9450);">Custo</div>
<div class="t" style="left:241.68px;top:402.00px;font-size:10.6px;color:#111;font-weight:bold;transform:scaleX(1.0150);">7,425</div>
<div class="t" style="left:277.30px;top:393.00px;font-size:8px;color:#222;transform:scaleX(0.9450);">Custo Méd.</div>
<div class="t" style="left:298.48px;top:402.00px;font-size:10.6px;color:#111;font-weight:bold;transform:scaleX(1.0150);">7,425</div>
<div class="t" style="left:334.00px;top:393.00px;font-size:8px;color:#222;transform:scaleX(0.9450);">Preço Ref.</div>
<div class="t" style="left:377.56px;top:402.00px;font-size:10.6px;color:#111;font-weight:bold;transform:scaleX(1.0150);">7,43</div>
<div class="t" style="left:407.50px;top:393.00px;font-size:8px;color:#222;transform:scaleX(0.9450);">Preço Venda</div>
<div class="t" style="left:429.18px;top:402.00px;font-size:10.6px;color:#111;font-weight:bold;transform:scaleX(1.0150);">34,62</div>
<div class="t" style="left:466.60px;top:329.00px;font-size:8px;color:#222;transform:scaleX(0.9621);">Movimentações</div>
<div class="t" style="left:746.60px;top:329.00px;font-size:8px;color:#222;transform:scaleX(0.9377);">Média por Dia</div>
<div class="t" style="left:473.85px;top:341.00px;font-size:8px;color:#222;transform:scaleX(0.9300);">Ano - Mês</div>
<div class="t" style="left:519.79px;top:341.00px;font-size:8px;color:#222;transform:scaleX(0.9300);">Vendas</div>
<div class="t" style="left:559.71px;top:341.00px;font-size:8px;color:#222;transform:scaleX(0.9300);">Compras</div>
<div class="t" style="left:601.36px;top:341.00px;font-size:8px;color:#222;transform:scaleX(0.9300);">Transf.</div>
<div class="t" style="left:469.50px;top:352.00px;font-size:8px;color:#111;">2024-02</div>
<div class="t" style="left:532.03px;top:352.00px;font-size:8px;color:#111;">2,00</div>
<div class="t" style="left:579.23px;top:352.00px;font-size:8px;color:#111;">0,00</div>
<div class="t" style="left:608.73px;top:352.00px;font-size:8px;color:#111;">0,00</div>
<div class="t" style="left:469.50px;top:365.00px;font-size:8px;color:#111;">2024-01</div>
<div class="t" style="left:532.03px;top:365.00px;font-size:8px;color:#111;">0,00</div>
<div class="t" style="left:579.23px;top:365.00px;font-size:8px;color:#111;">0,00</div>
<div class="t" style="left:608.73px;top:365.00px;font-size:8px;color:#111;">0,00</div>
<div class="t" style="left:469.50px;top:378.00px;font-size:8px;color:#111;">2023-12</div>
<div class="t" style="left:532.03px;top:378.00px;font-size:8px;color:#111;">0,00</div>
<div class="t" style="left:579.23px;top:378.00px;font-size:8px;color:#111;">0,00</div>
<div class="t" style="left:608.73px;top:378.00px;font-size:8px;color:#111;">0,00</div>
<div class="t" style="left:469.50px;top:391.00px;font-size:8px;color:#111;">2023-11</div>
<div class="t" style="left:532.03px;top:391.00px;font-size:8px;color:#111;">4,00</div>
<div class="t" style="left:579.23px;top:391.00px;font-size:8px;color:#111;">1,00</div>
<div class="t" style="left:608.73px;top:391.00px;font-size:8px;color:#111;">0,00</div>
<div class="t" style="left:469.50px;top:404.00px;font-size:8px;color:#111;">2023-10</div>
<div class="t" style="left:532.03px;top:404.00px;font-size:8px;color:#111;">3,00</div>
<div class="t" style="left:579.23px;top:404.00px;font-size:8px;color:#111;">0,00</div>
<div class="t" style="left:608.73px;top:404.00px;font-size:8px;color:#111;">0,00</div>
<div class="t" style="left:14.20px;top:425.00px;font-size:8px;color:#222;transform:scaleX(0.9285);">Opções</div>
<div class="t" style="left:67.50px;top:425.00px;font-size:8px;color:#222;transform:scaleX(0.9151);">Ferramentas</div>
<div class="t" style="left:137.00px;top:425.00px;font-size:8px;color:#222;transform:scaleX(0.9417);">Consultas</div>
<div class="t" style="left:197.50px;top:425.00px;font-size:8px;color:#222;transform:scaleX(0.9633);">Inclusão Múltipla</div>
<div class="t" style="left:279.60px;top:425.00px;font-size:8px;color:#222;transform:scaleX(0.9570);">Editar</div>
<div class="t" style="left:332.00px;top:425.00px;font-size:8px;color:#222;transform:scaleX(0.8998);">Excluir</div>
<div class="t" style="left:761.00px;top:425.00px;font-size:8px;color:#d23048;transform:scaleX(0.9036);">Fechar</div>
<svg width="800" height="437" viewBox="0 0 800 437">
<path d="M197.5 38.4 L197.2 44 L130 41 L56.5 36.9 L56 43.5 L33.3 34.6 L57 26.4 L56.8 31.9 L130 34.5 Z" fill="#ff0000" />
</svg>
</body></html>
